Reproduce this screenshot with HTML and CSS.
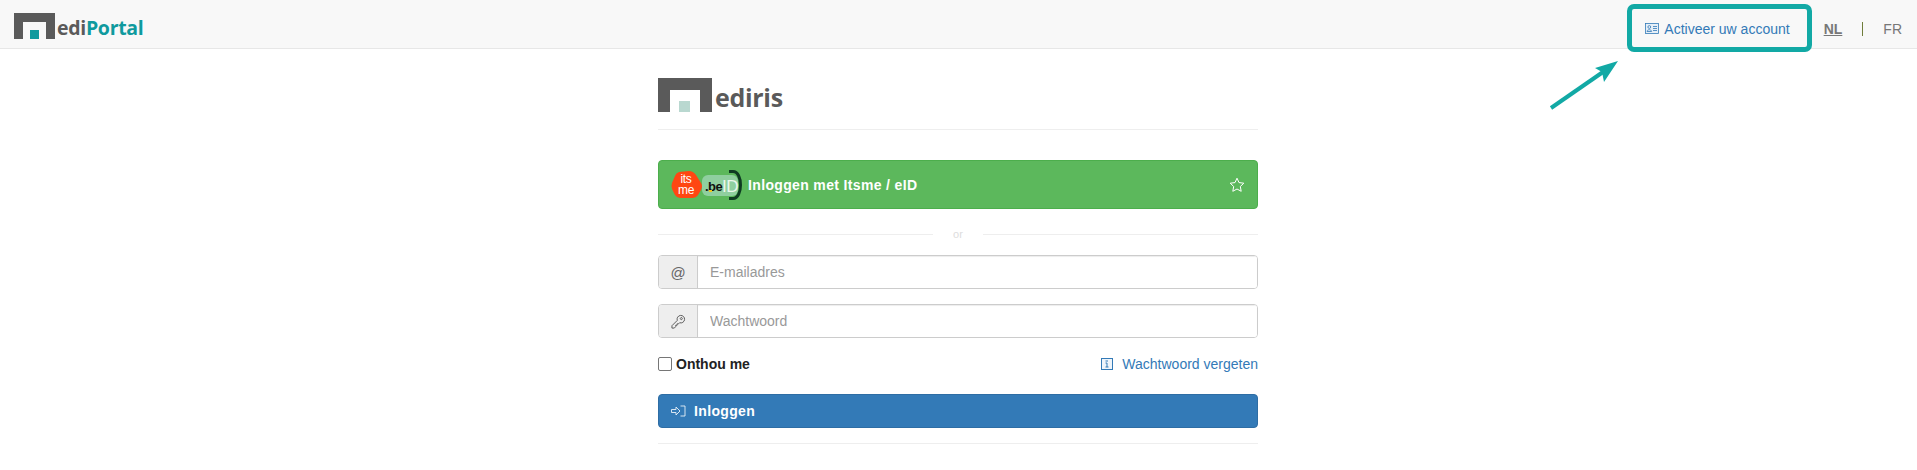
FILE: index.html
```html
<!DOCTYPE html>
<html lang="en">
<head>
    <meta charset="UTF-8">
    <meta name="viewport" content="width=device-width, initial-scale=1.0">
    <link rel="stylesheet" href="styles.css">
    <title>MediPortal</title>
</head>
<body>
    <nav class="topbar">
        <a class="brand" href="#">
            <svg class="brand_icon" viewBox="0 0 41 26"><path fill="#5a5a5a" d="M0 0H41V26H32V9H9V26H0Z"/><rect x="16" y="17" width="9" height="9" fill="#0f9a9e"/></svg>
            <span class="brand_text">edi<b>Portal</b></span>
        </a>
        <div class="topbar_right">
            <a class="activate" href="#">
                <svg class="icon_card" viewBox="0 0 14 11"><rect x=".5" y=".5" width="13" height="10" fill="#e6eff7" stroke="#337ab7" stroke-width=".8"/><circle cx="4.300" cy="4" r="1.400" fill="none" stroke="#337ab7" stroke-width=".8"/><path d="M2 8.500c.3-2.400 4.300-2.400 4.600 0ZM8 3.500h4M8 5.500h4M8 7.500h4" fill="none" stroke="#337ab7" stroke-width=".8"/></svg>
                Activeer uw account
            </a>
            <a class="lang lang_on" href="#">NL</a>
            <span class="lang_sep"></span>
            <a class="lang" href="#">FR</a>
        </div>
    </nav>

    <div class="mark_box"></div>
    <svg class="mark_arrow" viewBox="0 0 80 60"><path d="M2 50 L54 14" stroke="#12a9a5" stroke-width="4" fill="none"/><path d="M69 3 L46 10 L53 14 L55 24Z" fill="#12a9a5"/></svg>

    <main class="login">
        <div class="logo">
            <svg class="logo_icon" viewBox="0 0 54 34"><path fill="#5a5a5a" d="M0 0H54V34H42V12H12V34H0Z"/><rect x="21" y="23" width="11" height="11" fill="#b9d8d0"/></svg>
            <span class="logo_text">ediris</span>
        </div>
        <hr class="line">

        <a class="btn btn_green" href="#">
            <svg class="id_logos" viewBox="0 0 72 30">
                <path fill="#ff4612" d="M8 2 L18 1 Q22 1 25 5 L30 13 Q32 16 30 20 L27 25 Q25 28 21 28 L9 28 Q6 28 4 25 L1 19 Q0 16 1 13 L4 6 Q5 3 8 2Z"/>
                <text x="15" y="13" class="its">its</text>
                <text x="15" y="24" class="its">me</text>
                <rect x="31" y="5" width="36" height="21" rx="6" fill="#8fcf9f"/>
                <path d="M58 1.500 H62 C72 1.500 72 28.500 62 28.500 H58" fill="none" stroke="#0e3b22" stroke-width="3"/>
                <text x="34" y="21" class="be">.be</text>
                <text x="51" y="22" class="bid">ID</text>
                <rect x="38" y="20" width="3" height="2" fill="#f2c617"/>
            </svg>
            <span>Inloggen met Itsme / eID</span>
            <svg class="star" viewBox="0 0 16 16"><path d="M8 1.200l2 4.400 4.800.6-3.500 3.300.9 4.800L8 12l-4.200 2.300.9-4.800L1.200 6.200 6 5.600Z" fill="none" stroke="#fff" stroke-width="1"/></svg>
        </a>

        <div class="or"><span>or</span></div>

        <div class="field">
            <span class="field_addon at">@</span>
            <input class="field_input" type="text" placeholder="E-mailadres">
        </div>
        <div class="field">
            <span class="field_addon">
                <svg class="icon_key" viewBox="0 0 16 16"><path d="M1 15v-2.500l5.700-5.700a4 4 0 1 1 2.500 2.500L8 10.500H6.500V12H5v1.500l-1.500 1.500Z M11 3.800a1.100 1.100 0 1 0 .01 0" fill="none" stroke="#555" stroke-width="1"/></svg>
            </span>
            <input class="field_input" type="text" placeholder="Wachtwoord">
        </div>

        <div class="options">
            <label class="remember"><span class="check"></span>Onthou me</label>
            <a class="forgot" href="#">
                <svg class="icon_info" viewBox="0 0 12 12"><rect x=".5" y=".5" width="11" height="11" fill="#eef4fa" stroke="#337ab7"/><path d="M4.500 3h2.500M6 5v4M4.500 9h3M4.500 5H6" stroke="#337ab7" fill="none"/></svg>
                Wachtwoord vergeten
            </a>
        </div>

        <a class="btn btn_blue" href="#">
            <svg class="icon_signin" viewBox="0 0 15 12"><path d="M.5 4.500H5V2l4 4-4 4V7.500H.5ZM9.500 1h4.500v10H9.500" fill="none" stroke="#e8f0f7" stroke-width=".9"/></svg>
            <span>Inloggen</span>
        </a>
        <hr class="line line_end">
    </main>
</body>
</html>
```

FILE: styles.css
```css
*{
    margin:0;
    padding:0;
    box-sizing: border-box;
}

body{
    background: #fff;
    height:100vh;
    overflow: hidden;
    font-family: "Liberation Sans", Arial, sans-serif;
    font-size:14px;
    color:#333;
}

a{
    text-decoration: none;
}

.topbar{
    height:49px;
    background-color: #f8f8f8;
    border-bottom:1px solid #e7e7e7;
    display:flex;
    justify-content: space-between;
}

.brand{
    display:flex;
    align-items: flex-end;
    margin-left:14px;
    height:39px;
}

.brand_icon{
    width:41px;
    height:26px;
}

.brand_text{
    font-family: "Open Sans", sans-serif;
    font-weight:700;
    font-size:19.5px;
    line-height:22px;
    height:22px;
    margin-left:2px;
    letter-spacing:-.3px;
    color:#5a5a5a;
}

.brand_text b{
    color:#0f9a9e;
    font-weight:700;
}

.topbar_right{
    display:flex;
    align-items: center;
    padding-right:15px;
    height:57px;
}

.activate{
    display:flex;
    align-items: center;
    color:#337ab7;
    margin-right:34px;
}

.icon_card{
    width:14px;
    height:11px;
    margin-right:5px;
}

.lang{
    color:#777;
}

.lang_on{
    font-weight:bold;
    text-decoration: underline;
}

.lang_sep{
    width:1px;
    height:14px;
    background-color: #6f7d3a;
    margin:0 20px;
}

/* annotation drawn on top of the screenshot */
.mark_box{
    position:absolute;
    left:1627px;
    top:4px;
    width:185px;
    height:48px;
    border:5px solid #12a9a5;
    border-radius:7px;
}

.mark_arrow{
    position:absolute;
    left:1549px;
    top:58px;
    width:80px;
    height:60px;
}

.login{
    width:600px;
    margin-left:658px;
    padding-top:28px;
}

.logo{
    display:flex;
    align-items: flex-end;
    height:35px;
}

.logo_icon{
    width:54px;
    height:34px;
}

.logo_text{
    font-family: "Open Sans", sans-serif;
    font-weight:700;
    font-size:25px;
    line-height:29px;
    height:29px;
    margin-left:3px;
    letter-spacing:-.3px;
    color:#5a5a5a;
}

.line{
    border:0;
    border-top:1px solid #eee;
    margin-top:17px;
}

.line_end{
    margin-top:15px;
}

.btn{
    display:flex;
    align-items: center;
    width:100%;
    color:#fff;
    font-weight:bold;
    letter-spacing:.35px;
    border-radius:4px;
}

.btn_green{
    height:49px;
    margin-top:30px;
    padding:0 12px;
    background-color: #5cb85c;
    border:1px solid #4cae4c;
}

.id_logos{
    width:72px;
    height:30px;
    margin-right:5px;
}

.its{
    font-family: "Liberation Sans", sans-serif;
    font-size:12px;
    font-weight:normal;
    fill:#fff;
    text-anchor: middle;
    letter-spacing:-.3px;
}

.be{
    font-family: "Liberation Sans", sans-serif;
    font-size:13px;
    font-weight:bold;
    fill:#111;
    letter-spacing:-.5px;
}

.bid{
    font-family: "Liberation Sans", sans-serif;
    font-size:17px;
    font-weight:normal;
    fill:#eaf6ec;
    letter-spacing:-.5px;
}

.star{
    width:16px;
    height:16px;
    margin-left:auto;
}

.or{
    display:flex;
    align-items: center;
    gap:20px;
    height:16px;
    margin-top:17px;
    font-size:11px;
    color:#ddd;
}

.or::before, .or::after{
    content:"";
    flex:1;
    border-top:1px solid #eee;
}

.field{
    display:flex;
    height:34px;
    margin-top:15px;
    border:1px solid #ccc;
    border-radius:4px;
    overflow: hidden;
}

.or + .field{
    margin-top:13px;
}

.field_addon{
    width:39px;
    display:flex;
    align-items: center;
    justify-content: center;
    background-color: #eee;
    border-right:1px solid #ccc;
    color:#666;
}

.at{
    font-size:15px;
}

.icon_key{
    width:15px;
    height:15px;
}

.field_input{
    flex:1;
    border:0;
    outline:none;
    padding:0 12px;
    font-family: inherit;
    font-size:14px;
    box-shadow: inset 0 1px 1px rgba(0,0,0,.075);
}

.field_input::placeholder{
    color:#999;
}

.options{
    display:flex;
    justify-content: space-between;
    align-items: center;
    height:20px;
    margin-top:16px;
}

.remember{
    display:flex;
    align-items: center;
    font-weight:bold;
    color:#222;
}

.check{
    width:14px;
    height:14px;
    margin-right:4px;
    background-color: #fff;
    border:1.500px solid #767676;
    border-radius:2px;
}

.forgot{
    display:flex;
    align-items: center;
    color:#337ab7;
}

.icon_info{
    width:12px;
    height:12px;
    margin-right:9px;
}

.btn_blue{
    height:34px;
    margin-top:20px;
    padding:0 12px;
    background-color: #337ab7;
    border:1px solid #2e6da4;
}

.icon_signin{
    width:15px;
    height:12px;
    margin-right:8px;
}
```
